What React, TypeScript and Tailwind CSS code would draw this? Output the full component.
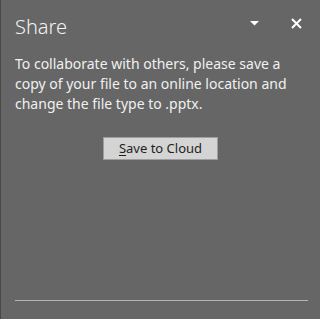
export default function App() {
  return (
    <div className="relative w-[320px] h-[319px] bg-[#666666] border-l border-[#484848] overflow-hidden" style={{ fontFamily: '"Noto Sans", "Open Sans", sans-serif' }}>
      <div className="flex items-center h-[50px] pl-[14px] pr-[14px]">
        <h1 className="flex-1 text-[20px] font-light text-[#f2f2f2] leading-none mt-[3px]">Share</h1>
        <button className="w-[20px] h-[20px] flex items-center justify-center mr-[22px] -mt-[3px]">
          <svg width="9" height="5" viewBox="0 0 9 5"><polygon points="0,0 9,0 4.5,4.5" fill="#ffffff" /></svg>
        </button>
        <button className="w-[20px] h-[20px] flex items-center justify-center -mt-[3px]">
          <svg width="11" height="11" viewBox="0 0 11 11"><path d="M1 1 L10 10 M10 1 L1 10" stroke="#ffffff" strokeWidth="2" /></svg>
        </button>
      </div>
      <p className="mt-[4px] px-[14px] text-[14px] leading-[20px] text-[#f0f0f0]">
        To collaborate with others, please save a copy of your file to an online location and change the file type to .pptx.
      </p>
      <div className="flex justify-center mt-[23px]">
        <button className="w-[115px] h-[23px] bg-[#d4d4d4] border border-[#9e9e9e] text-[13px] text-[#1e1e1e] leading-none">
          <span className="underline underline-offset-2">S</span>ave to Cloud
        </button>
      </div>
      <div className="absolute left-[14px] right-[12px] top-[300px] h-px bg-[#b4b4b4]" />
    </div>
  );
}
